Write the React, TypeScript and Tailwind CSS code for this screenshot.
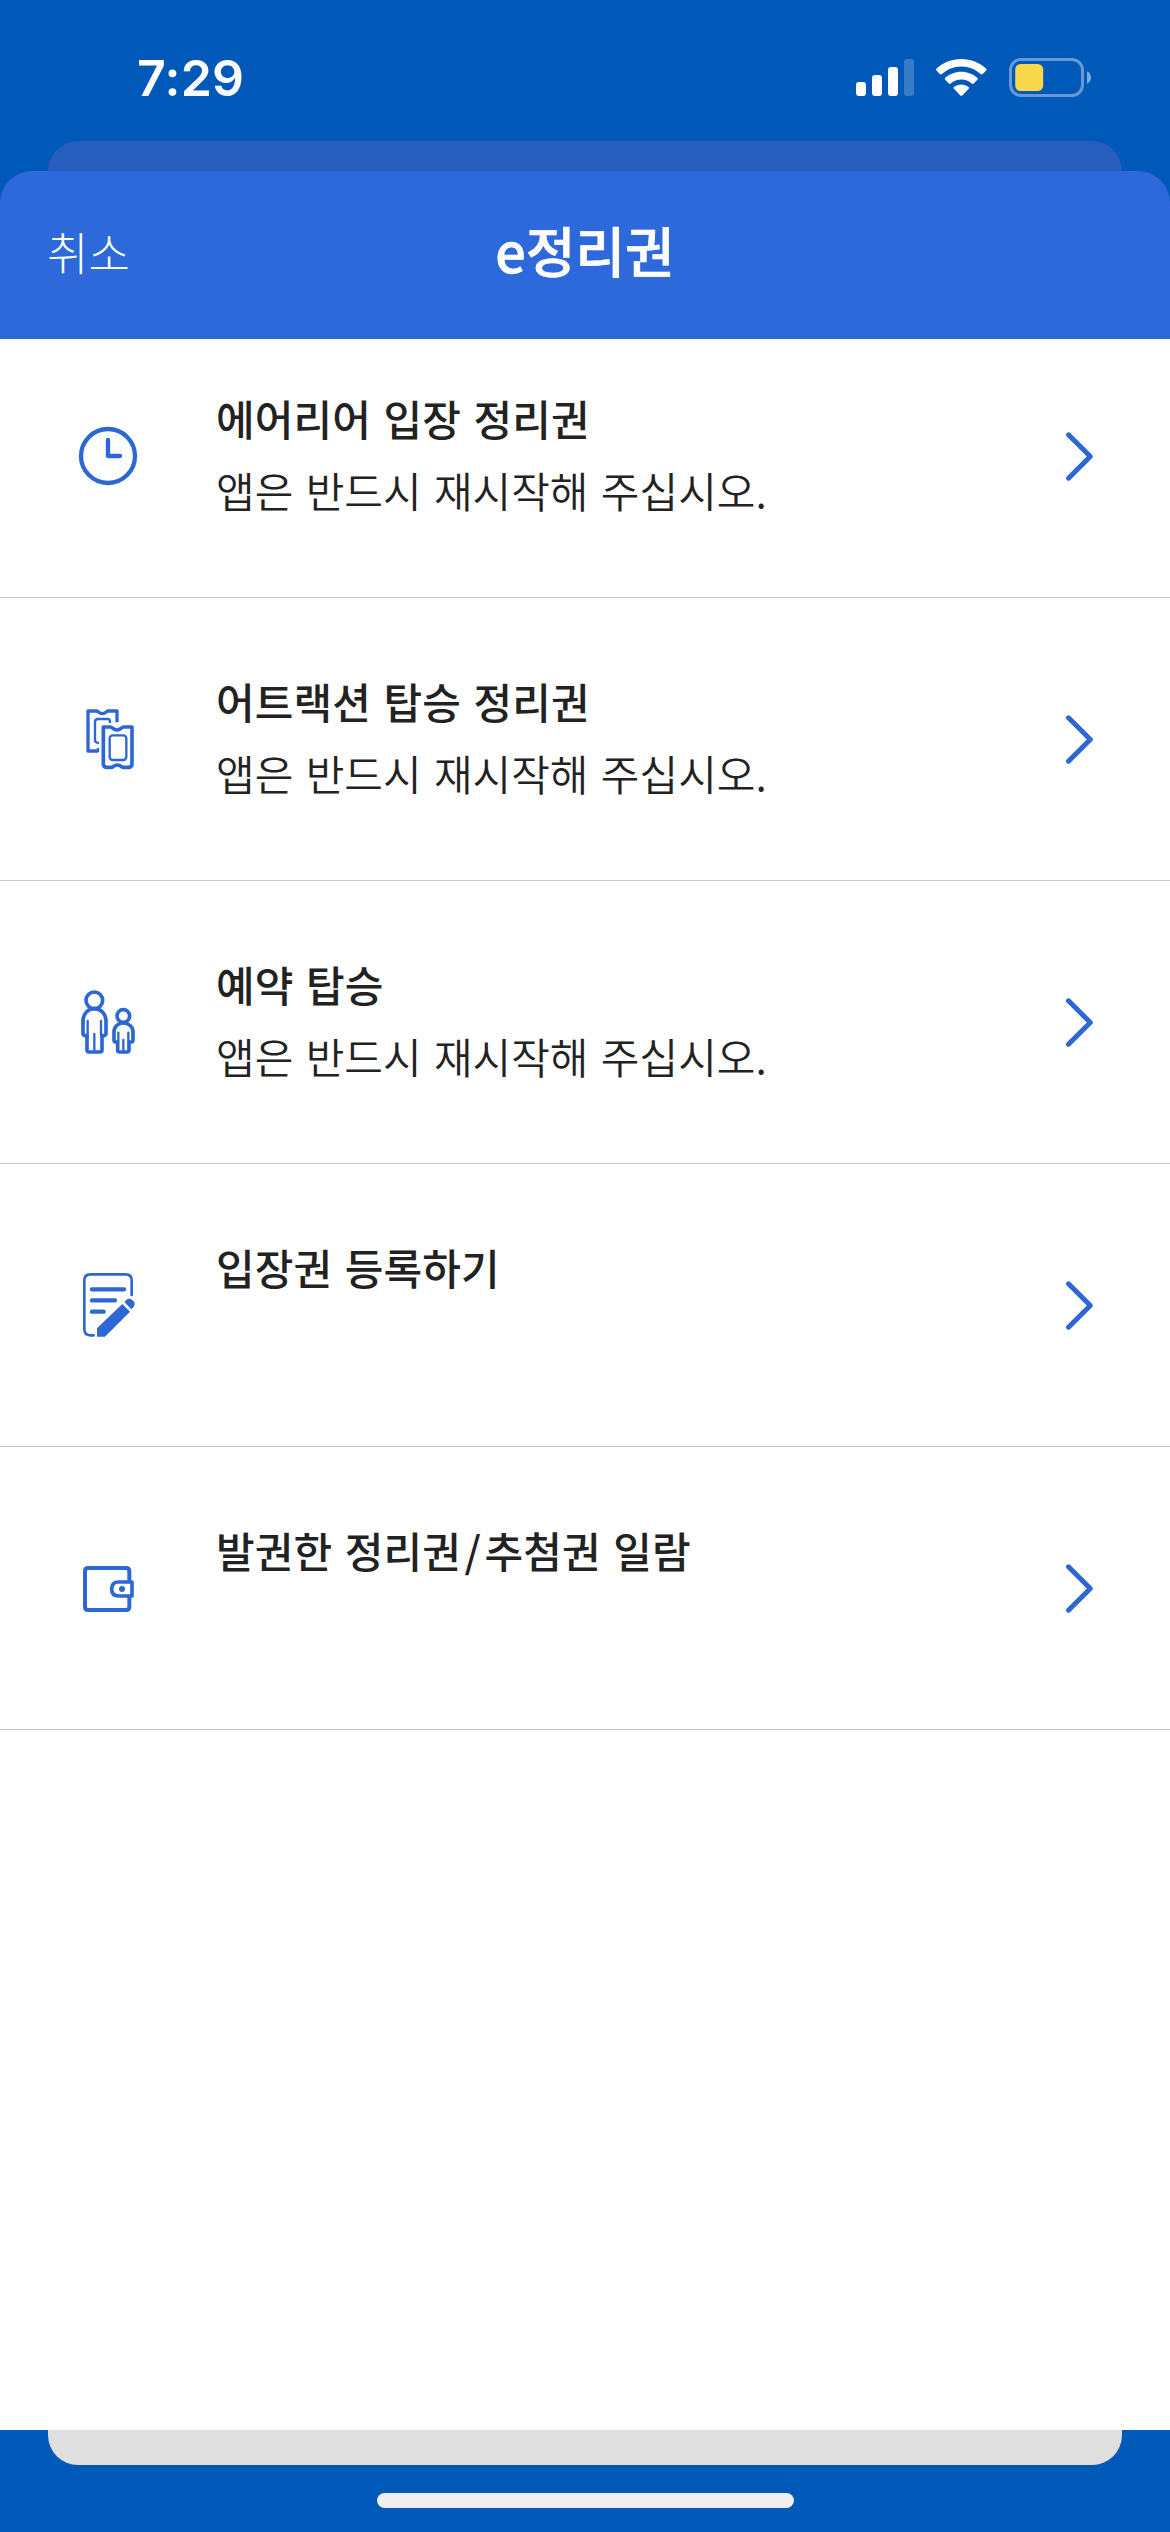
import type { ReactNode } from "react";

const BLUE = "#2d67d3";

function StatusBar() {
  return (
    <div className="flex h-[141px] shrink-0 items-start justify-between pl-[137px] pr-[79px] text-white">
      <div className="mt-[47px] font-['Inter'] text-[50px] font-semibold leading-[62px] tracking-[0.3px]">7:29</div>
      <div className="mt-[58px] flex items-start">
        <svg className="mt-px" width="59" height="38" viewBox="0 0 59 38" fill="currentColor">
          <rect x="0" y="23" width="10" height="14" rx="3" />
          <rect x="16" y="16" width="10" height="21" rx="3" />
          <rect x="32" y="8" width="10" height="29" rx="3" />
          <rect x="48" y="0" width="10" height="37" rx="3" opacity="0.22" />
        </svg>
        <svg className="ml-[21px] mt-px" width="51" height="37" viewBox="0 0 51 37" fill="currentColor">
          <path d="M25.3 0C35 0 43.7 3.6 50 9.6c.7.7.7 1.4.1 2l-3.4 3.5c-.6.6-1.3.6-2 0C39.500 10.300 32.800 7.500 25.300 7.500S11.100 10.300 5.900 15.100c-.7.6-1.400.6-2 0L.5 11.600c-.6-.6-.6-1.300.1-2C6.900 3.600 15.600 0 25.300 0z" />
          <path d="M25.300 12.700c6.200 0 11.800 2.300 16 6.100.7.700.7 1.400.1 2l-3.600 3.600c-.6.600-1.300.600-2 .1-2.900-2.600-6.500-4.100-10.500-4.100s-7.600 1.500-10.500 4.100c-.7.500-1.400.500-2-.1l-3.600-3.600c-.6-.600-.6-1.300.1-2 4.200-3.800 9.800-6.100 16-6.100z" />
          <path d="M25.300 25.400c2.800 0 5.300 1 7.300 2.500.7.600.7 1.300.1 1.900l-6.400 6.600c-.6.600-1.400.600-2 0l-6.400-6.600c-.6-.600-.6-1.300.1-1.900 2-1.500 4.500-2.500 7.300-2.500z" />
        </svg>
        <svg className="ml-[22px]" width="82" height="39" viewBox="0 0 82 39">
          <rect x="1.500" y="1.500" width="72" height="36" rx="10.500" fill="none" stroke="#fff" strokeOpacity="0.4" strokeWidth="3" />
          <rect x="6.200" y="6" width="28" height="27" rx="5.500" fill="#f8d84a" />
          <path d="M78 13.200c2.500 1 4 3.500 4 6.300s-1.500 5.300-4 6.300z" fill="#fff" fillOpacity="0.5" />
        </svg>
      </div>
    </div>
  );
}

function Icon({ children }: { children: ReactNode }) {
  return (
    <svg
      className="ml-[70px] shrink-0"
      width="80"
      height="90"
      viewBox="0 0 240 270"
      fill="none"
      stroke={BLUE}
      strokeLinecap="round"
      strokeLinejoin="round"
    >
      {children}
    </svg>
  );
}

const ClockIcon = () => (
  <Icon>
    <g transform="translate(-30 -33)" strokeWidth="13">
      <circle cx="144" cy="168" r="81" />
      <path d="M144 120v48h36" />
    </g>
  </Icon>
);

const TicketsIcon = () => (
  <Icon>
    <g transform="translate(0 -12)">
      <path
        d="M84 183H54V63h26c4 0 8 8 17 8s13-8 17-8h27v34"
        strokeWidth="10"
        strokeLinecap="butt"
      />
      <path d="M84 174v12" strokeWidth="7" strokeLinecap="butt" />
      <path d="M87 159c-8 0-12-3-12-8V96q0-9 9-9h29q7 0 7 9v3" strokeWidth="7" strokeLinecap="butt" />
      <path d="M100 111h22c5 0 8 9 19 9s14-9 19-9h26v111q0 9-9 10h-17c-5 0-8-7-18-7s-13 7-18 7h-15q-9-1-9-10z" strokeWidth="11" />
      <rect x="119" y="136" width="50" height="74" rx="9" strokeWidth="7" />
    </g>
  </Icon>
);

const PeopleIcon = () => (
  <Icon>
    <g transform="translate(0 -6)" strokeWidth="11">
      <circle cx="73" cy="76" r="25" />
      <path d="M53 138v46M93 138v46" strokeWidth="7" />
      <path d="M50 182h-5q-6-1-6-7v-36c0-23 15-38 34-38s35 15 35 38v36q0 6-6 7h-6M51 184v41q0 6 6 6h32q7 0 7-6v-41" />
      <path d="M73 177v52" strokeWidth="7" />
      <circle cx="160" cy="123" r="19" />
      <path d="M145 173v28M175 173v28" strokeWidth="7" />
      <path d="M142 201h-5q-5-1-5-7v-23c0-16 12-27 28-27s29 11 29 27v23q0 6-5 7h-6M143 203v22q0 6 6 6h22q6 0 6-6v-22" />
      <path d="M160 195v34" strokeWidth="7" />
    </g>
  </Icon>
);

const NoteIcon = () => (
  <Icon>
    <path d="M71 226H61q-18 0-18-18V61q0-18 18-18h106q18 0 18 18v44" strokeWidth="8" />
    <path d="M66 88h96M66 121h69M66 155h35" strokeWidth="13" />
    <path d="M157 132l23 23-75 75H81v-25z" fill={BLUE} stroke="none" />
    <path d="M163 126l6-6q7-7 17-1l5 5q6 8 0 16l-7 8z" fill={BLUE} stroke="none" />
  </Icon>
);

const WalletIcon = () => (
  <Icon>
    <g transform="translate(0 21)" strokeWidth="12">
      <path d="M178 92V64q0-10-10-10H54q-9 0-9 10v106q0 10 9 10h114q10 0 10-10v-28" />
      <path d="M186 96v42h-40q-21 0-21-21t21-21z" strokeWidth="11" />
      <circle cx="156" cy="117" r="9" fill={BLUE} stroke="none" />
    </g>
  </Icon>
);

const rows: { id: string; title: ReactNode; note?: string; icon: ReactNode }[] = [
  { id: "area", title: "에어리어 입장 정리권", note: "앱은 반드시 재시작해 주십시오.", icon: <ClockIcon /> },
  { id: "attraction", title: "어트랙션 탑승 정리권", note: "앱은 반드시 재시작해 주십시오.", icon: <TicketsIcon /> },
  { id: "reserve", title: "예약 탑승", note: "앱은 반드시 재시작해 주십시오.", icon: <PeopleIcon /> },
  { id: "register", title: "입장권 등록하기", icon: <NoteIcon /> },
  {
    id: "issued",
    title: (
      <>
        발권한 정리권<span className="mx-[3.5px]">/</span>추첨권 일람
      </>
    ),
    icon: <WalletIcon />,
  },
];

function Row({ title, note, icon }: { title: ReactNode; note?: string; icon: ReactNode }) {
  return (
    <li className="flex h-[283px] shrink-0 items-center border-b border-[#c6c6c6] first:-mt-6">
      {icon}
      <div className="ml-[66px] flex-1 self-start whitespace-nowrap pt-[67px] text-[42px] leading-[72px] text-[#222] [word-spacing:3px]">
        <div className="font-medium tracking-[0.1px]">{title}</div>
        {note && <div className="font-[350]">{note}</div>}
      </div>
      <svg className="mr-[70px] shrink-0" width="36" height="56" viewBox="0 0 36 56" fill="none" stroke={BLUE} strokeWidth="5" strokeLinecap="round" strokeLinejoin="round">
        <path d="M4.500 6.800l21.800 21.700L4.500 50.200" />
      </svg>
    </li>
  );
}

export default function App() {
  return (
    <div className="flex h-[2532px] w-[1170px] flex-col overflow-hidden bg-[#0058b9] font-['Noto_Sans_CJK_KR',sans-serif]">
      <StatusBar />
      <div className="mx-12 h-[30px] shrink-0 rounded-t-[30px] bg-[#275dbf]" />
      <main className="flex h-[2259px] shrink-0 flex-col bg-[linear-gradient(#0058b9_50%,#fff_50%)]">
        <header className="grid h-[168px] shrink-0 grid-cols-3 items-center rounded-t-[32px] bg-[#2d69da] px-12 pb-[7px] text-white">
          <button className="-ml-px justify-self-start text-[45px] font-light leading-[60px] text-[#f6ffe9]">취소</button>
          <h1 className="justify-self-center whitespace-nowrap pb-1 text-[54px] font-medium leading-[70px] [-webkit-text-stroke:0.7px_white]">e정리권</h1>
        </header>
        <ul className="flex flex-1 flex-col bg-white">
          {rows.map(({ id, ...row }) => (
            <Row key={id} {...row} />
          ))}
        </ul>
      </main>
      <div className="mx-12 h-[35px] shrink-0 rounded-b-[30px] bg-[#dfdfdf]" />
      <div className="mx-auto mt-7 h-[15px] w-[417px] shrink-0 rounded-full bg-[#eee]" />
    </div>
  );
}
